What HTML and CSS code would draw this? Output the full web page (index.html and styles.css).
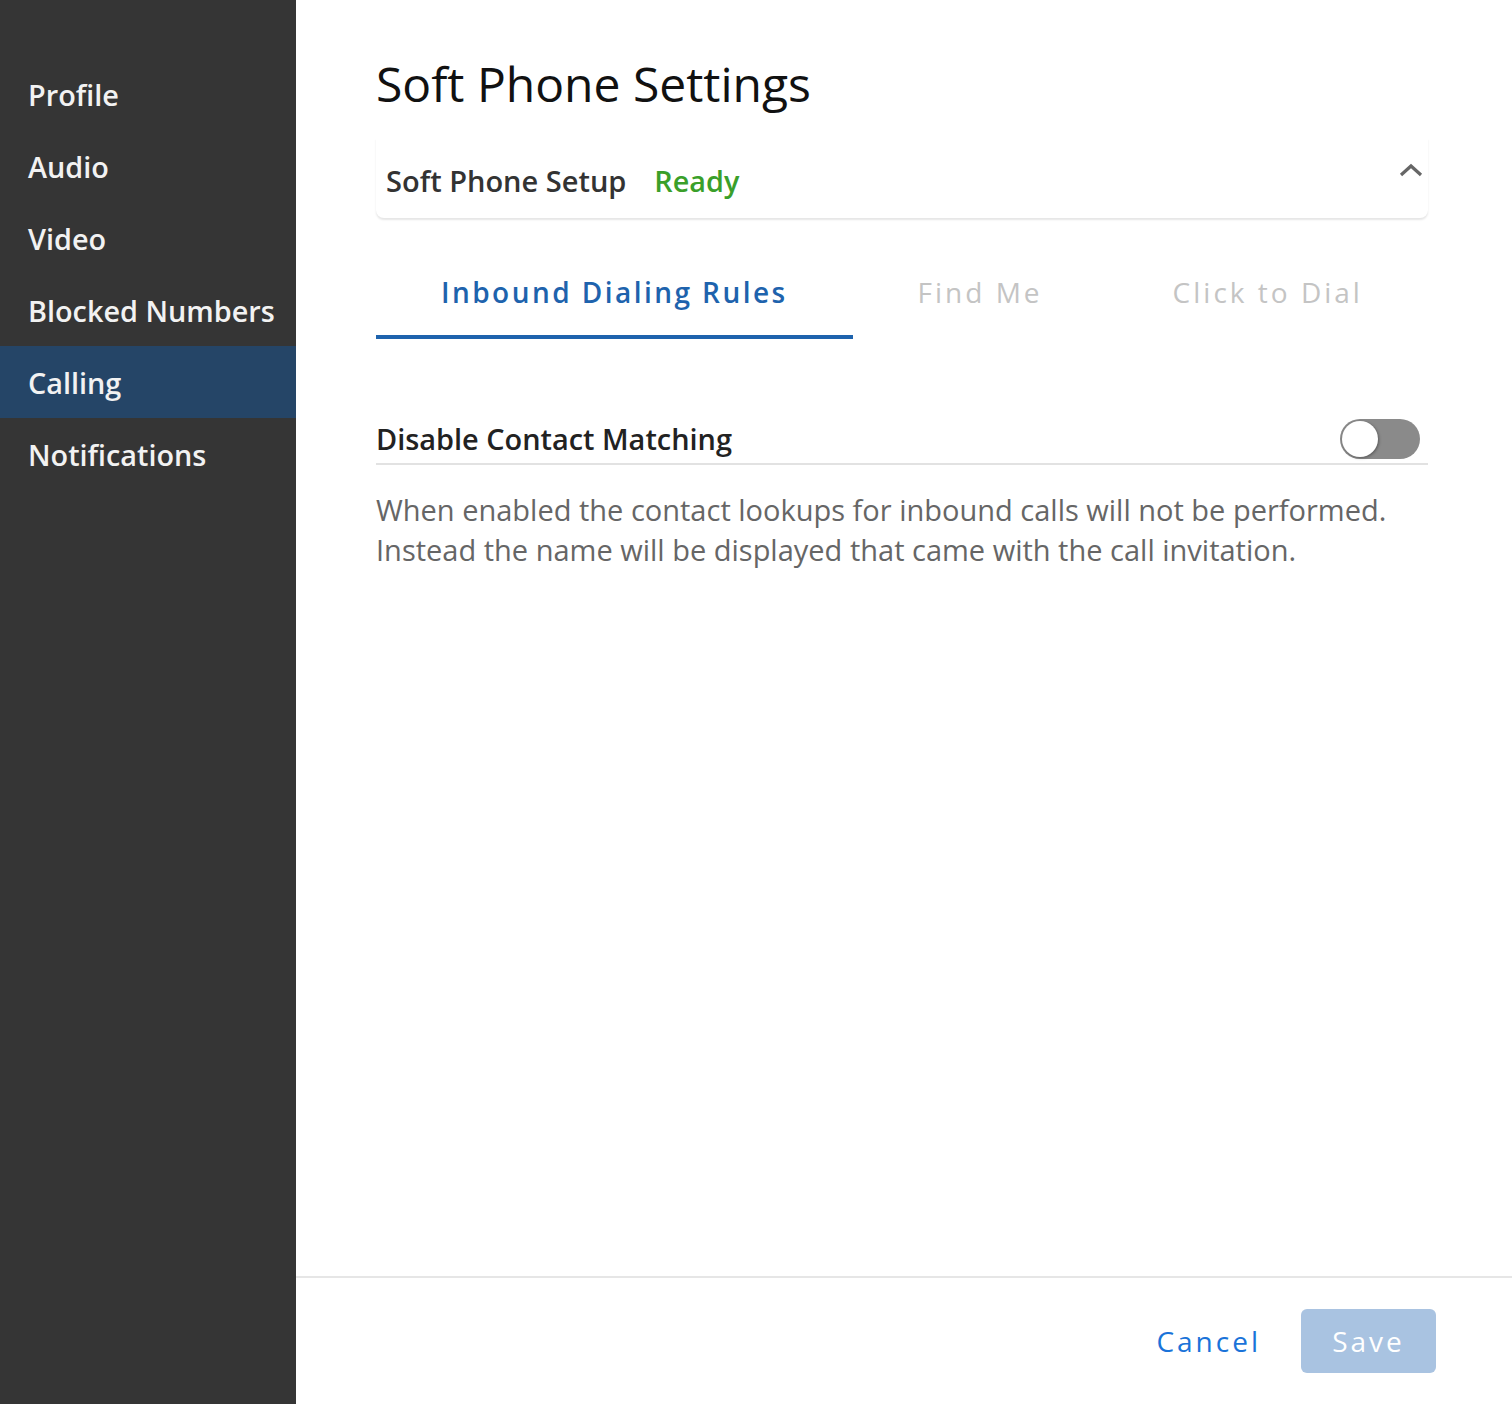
FILE: index.html
```html
<!DOCTYPE html>
<html>
<head>
<meta charset="utf-8">
<link rel="stylesheet" href="styles.css">
</head>
<body>
<div class="app">
  <nav class="sidebar">
    <div class="nav-item">Profile</div>
    <div class="nav-item">Audio</div>
    <div class="nav-item">Video</div>
    <div class="nav-item">Blocked Numbers</div>
    <div class="nav-item active">Calling</div>
    <div class="nav-item">Notifications</div>
  </nav>
  <main class="main">
    <div class="content">
      <h1 class="title">Soft Phone Settings</h1>
      <div class="setup-card">
        <span class="setup-label">Soft Phone Setup</span>
        <span class="setup-status">Ready</span>
        <svg class="chevron" width="26" height="16" viewBox="0 0 26 16"><path d="M3 13 L13 4 L23 13" fill="none" stroke="#666" stroke-width="3.2"/></svg>
      </div>
      <div class="tabs">
        <div class="tab active">Inbound Dialing Rules</div>
        <div class="tab">Find Me</div>
        <div class="tab">Click to Dial</div>
      </div>
      <div class="setting-row">
        <span class="setting-label">Disable Contact Matching</span>
        <span class="toggle"><span class="knob"></span></span>
      </div>
      <p class="desc">When enabled the contact lookups for inbound calls will not be performed. Instead the name will be displayed that came with the call invitation.</p>
    </div>
    <footer class="footer">
      <button class="btn-cancel">Cancel</button>
      <button class="btn-save">Save</button>
    </footer>
  </main>
</div>
</body>
</html>
```
FILE: styles.css
```css
* { box-sizing: border-box; }
html, body { margin: 0; padding: 0; }
body { font-family: "Open Sans", "Liberation Sans", sans-serif; background: #fff; }
.app { display: flex; width: 1512px; height: 1404px; }
.sidebar { width: 296px; flex: none; background: #353535; padding-top: 58px; }
.nav-item { height: 72px; display: flex; align-items: center; padding-left: 28px; color: #f2f2f2; font-size: 28.8px; font-weight: 600; }
.nav-item.active { background: #254567; }
.main { flex: 1; min-width: 0; display: flex; flex-direction: column; }
.content { flex: 1; padding: 52px 84px 0 80px; }
.title { margin: 0; font-size: 48px; font-weight: 400; color: #111; line-height: 64px; }
.setup-card { margin-top: 22px; height: 80px; display: flex; align-items: center; padding: 4px 10px 0; border-radius: 0 0 8px 8px; box-shadow: 0 2px 2px rgba(0,0,0,0.10); }
.setup-label { font-size: 29px; font-weight: 600; color: #333; }
.setup-status { margin-left: 28px; font-size: 28.8px; font-weight: 600; color: #3a9f2a; }
.chevron { margin-left: auto; margin-top: -20px; margin-right: -6px; }
.tabs { display: flex; margin-top: 31px; }
.tab { flex: none; white-space: nowrap; padding: 0 65px; height: 90px; display: flex; align-items: center; font-size: 28px; font-weight: 400; letter-spacing: 3px; color: #c4c4c4; border-bottom: 4px solid transparent; }
.tab.active { color: #1e63ad; border-bottom-color: #1e63ad; font-weight: 600; letter-spacing: 2.45px; }
.setting-row { margin-top: 78px; display: flex; align-items: center; justify-content: space-between; height: 48px; border-bottom: 2px solid #e2e2e2; padding-bottom: 3px; }
.setting-label { font-size: 28.9px; font-weight: 600; color: #222; }
.toggle { width: 80px; height: 40px; border-radius: 20px; background: #8a8a8a; margin-right: 8px; position: relative; display: block; }
.knob { position: absolute; left: 2px; top: 2px; width: 36px; height: 36px; border-radius: 50%; background: #fff; box-shadow: 1px 1px 3px rgba(0,0,0,0.35); }
.desc { margin: 25px 0 0; font-size: 29px; line-height: 40px; color: #666; font-weight: 400; }
.footer { height: 128px; border-top: 2px solid #e6e6e6; display: flex; align-items: center; justify-content: flex-end; padding-right: 76px; }
.btn-cancel { background: none; border: none; font-family: inherit; font-size: 28px; letter-spacing: 3px; color: #1a73d9; margin-right: 40px; padding: 0; }
.btn-save { background: #a9c3e1; border: none; border-radius: 6px; width: 135px; height: 64px; font-family: inherit; font-size: 28px; letter-spacing: 3px; color: #fff; padding: 0; }
```
